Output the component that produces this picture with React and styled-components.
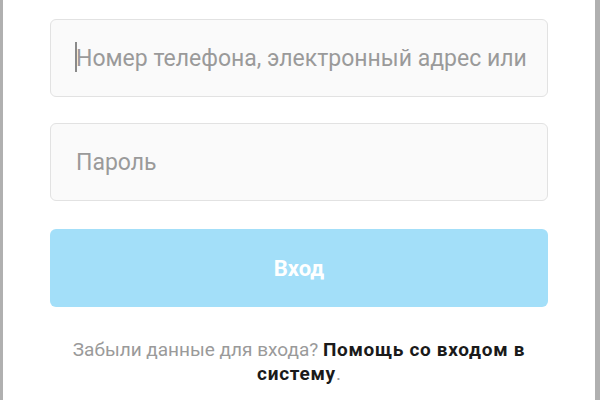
import React from 'react';
import styled, { createGlobalStyle } from 'styled-components';

const GlobalStyle = createGlobalStyle`
  html, body {
    margin: 0;
    padding: 0;
    background: #ffffff;
  }
  * {
    box-sizing: border-box;
  }
`;

const Frame = styled.div`
  width: 600px;
  height: 400px;
  overflow: hidden;
  background: #ffffff;
  border-left: 3px solid #b0b0b0;
  border-right: 5px solid #b0b0b0;
  font-family: Roboto, 'Noto Sans', sans-serif;
`;

const Form = styled.form`
  display: flex;
  flex-direction: column;
  padding: 19px 47px 0 47px;
  gap: 26px;
`;

const FieldWrap = styled.div`
  position: relative;
`;

const Field = styled.input`
  display: block;
  width: 100%;
  height: 78px;
  padding: 0 20px 0 25px;
  border: 1px solid #e2e2e2;
  border-radius: 6px;
  background: #fafafa;
  font-family: inherit;
  font-size: 23px;
  color: #262626;
  outline: none;

  &::placeholder {
    color: #9a9a9a;
  }
`;

const Caret = styled.span`
  position: absolute;
  left: 25px;
  top: 23px;
  width: 2px;
  height: 30px;
  background: #8a8a8a;
`;

const Submit = styled.button`
  width: 100%;
  height: 78px;
  margin-top: 2px;
  border: none;
  border-radius: 6px;
  background: #a3dff9;
  color: #ffffff;
  font-family: inherit;
  font-size: 22px;
  font-weight: 700;
`;

const Help = styled.div`
  margin-top: 5px;
  display: flex;
  flex-direction: column;
  align-items: center;
  font-size: 19px;
  line-height: 24px;
  color: #9a9a9a;
`;

const HelpLine = styled.div`
  white-space: nowrap;
`;

const HelpLink = styled.a`
  color: #1a1a1a;
  font-weight: 700;
  letter-spacing: 0.7px;
  text-decoration: none;
`;

export default function App() {
  return (
    <>
      <GlobalStyle />
      <Frame>
        <Form onSubmit={e => e.preventDefault()}>
          <FieldWrap>
            <Field type="text" placeholder="Номер телефона, электронный адрес или" />
            <Caret />
          </FieldWrap>
          <Field type="password" placeholder="Пароль" />
          <Submit type="submit">Вход</Submit>
          <Help>
            <HelpLine>
              Забыли данные для входа? <HelpLink href="#">Помощь со входом в</HelpLink>
            </HelpLine>
            <HelpLine>
              <HelpLink href="#">систему</HelpLink>.
            </HelpLine>
          </Help>
        </Form>
      </Frame>
    </>
  );
}
